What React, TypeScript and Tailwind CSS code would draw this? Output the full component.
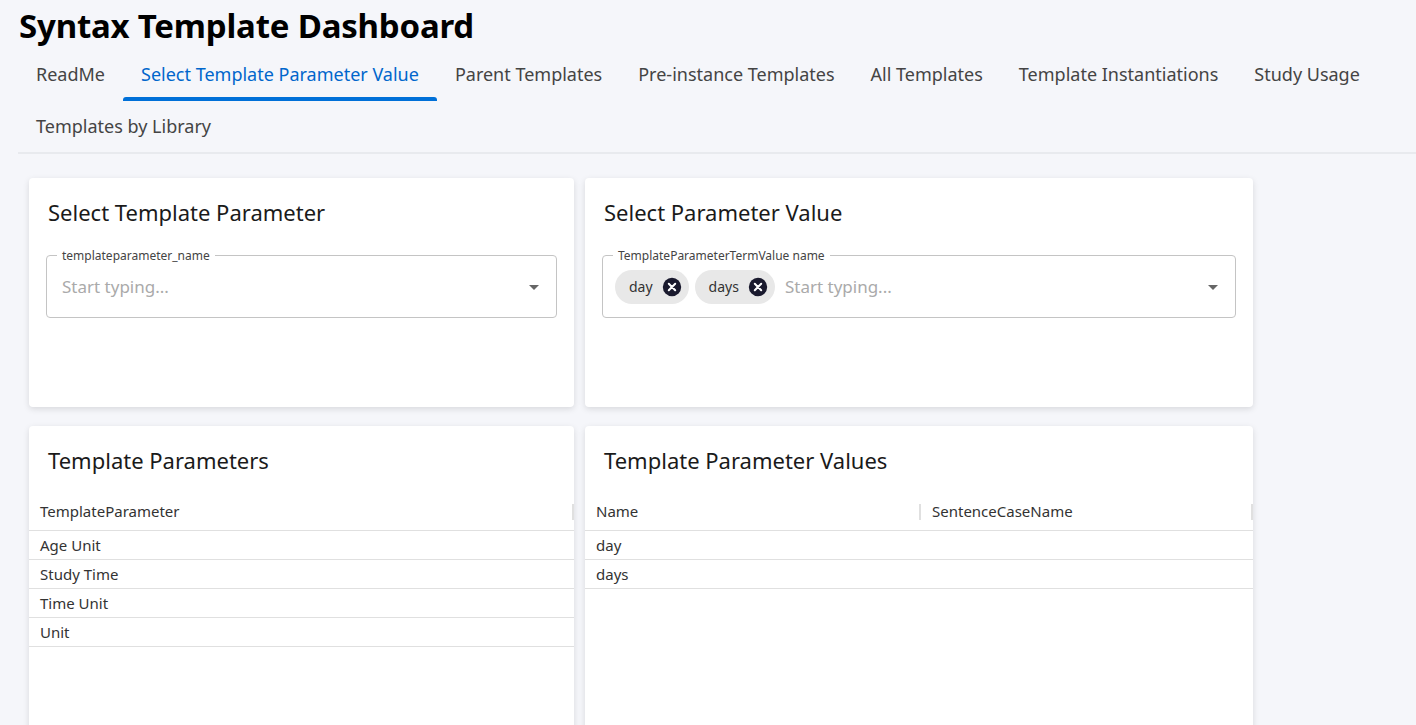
import React from "react";

const tabs = ["ReadMe","Select Template Parameter Value","Parent Templates","Pre-instance Templates","All Templates","Template Instantiations","Study Usage"];

function Caret(){return <svg width="24" height="24" viewBox="0 0 24 24" className="text-[#666]"><path d="M7 10l5 5 5-5z" fill="currentColor"/></svg>;}

function Chip({label}:{label:string}){return (
  <div className="flex items-center h-[34px] rounded-full bg-[#e8e8e8] pl-[14px] pr-[6px] gap-[8px] text-[14px] text-[#333]">
    <span>{label}</span>
    <svg width="22" height="22" viewBox="0 0 24 24"><circle cx="12" cy="12" r="10" fill="#1a1a2e"/><path d="M8.5 8.5l7 7M15.5 8.5l-7 7" stroke="#fff" strokeWidth="2.2" strokeLinecap="round"/></svg>
  </div>);}

function Table({cols,rows}:{cols:string[];rows:string[]}){return (
  <div className="mt-[16px]">
    <div className="flex h-[38px] items-center border-b border-[#e0e0e0] text-[15px] text-[#333]">
      {cols.map((c,i)=>(
        <div key={c} className={`flex items-center justify-between h-full ${cols.length===1?"flex-1":i===0?"w-[336px]":"flex-1"}`}>
          <span className="pl-[11px]">{c}</span>
          <span className="w-[2px] h-[16px] bg-[#e0e0e0]"></span>
        </div>))}
    </div>
    {rows.map(r=>(
      <div key={r} className="h-[29px] flex items-center border-b border-[#e0e0e0] pl-[11px] text-[15px] text-[#333]">{r}</div>))}
  </div>);}

export default function App(){
  return (
    <div className="min-h-[725px] h-[725px] overflow-hidden bg-[#f5f6fa] text-[#1a1a1a]" style={{fontFamily:'"Noto Sans", sans-serif'}}>
      <h1 className="pl-[19px] pt-[4px] text-[33px] font-bold leading-[44px] tracking-[-0.2px] text-black">Syntax Template Dashboard</h1>
      <div className="ml-[18px] border-b-2 border-[#e8eaee]">
        <div className="flex flex-wrap">
          {tabs.map((t,i)=>(
            <div key={t} className={`relative h-[52px] px-[18px] flex items-center text-[18px] ${i===1?"text-[#0066cc]":"text-[#444]"}`}>
              {t}
              {i===1 && <div className="absolute left-0 right-0 bottom-[-1px] h-[4px] rounded-t-[3px] bg-[#0070d8]"></div>}
            </div>))}
          <div className="h-[52px] px-[18px] flex items-center text-[18px] text-[#444]">Templates by Library</div>
        </div>
      </div>
      <div className="pl-[29px] pt-[24px] grid grid-cols-[545px_668px] gap-x-[11px] gap-y-[19px]">
        <div className="bg-white rounded-[4px] shadow-[0_2px_6px_rgba(0,0,0,0.12)] h-[229px] px-[17px] pt-[18px]">
          <div className="text-[22px] pl-[2px]">Select Template Parameter</div>
          <div className="relative mt-[26px] border border-[#c4c4c4] rounded-[4px] h-[63px] flex items-center pl-[15px] pr-[10px]">
            <span className="absolute -top-[9px] left-[10px] bg-white px-[5px] text-[12px] text-[#444]">templateparameter_name</span>
            <span className="flex-1 text-[17px] text-[#aaa]">Start typing...</span>
            <Caret/>
          </div>
        </div>
        <div className="bg-white rounded-[4px] shadow-[0_2px_6px_rgba(0,0,0,0.12)] h-[229px] px-[17px] pt-[18px]">
          <div className="text-[22px] pl-[2px]">Select Parameter Value</div>
          <div className="relative mt-[26px] border border-[#c4c4c4] rounded-[4px] h-[63px] flex items-center pl-[12px] pr-[10px] gap-[6px]">
            <span className="absolute -top-[9px] left-[10px] bg-white px-[5px] text-[12px] text-[#444]">TemplateParameterTermValue name</span>
            <Chip label="day"/><Chip label="days"/>
            <span className="flex-1 pl-[4px] text-[17px] text-[#aaa]">Start typing...</span>
            <Caret/>
          </div>
        </div>
        <div className="bg-white rounded-[4px] shadow-[0_2px_6px_rgba(0,0,0,0.12)] h-[320px] pt-[18px]">
          <div className="text-[22px] pl-[19px]">Template Parameters</div>
          <Table cols={["TemplateParameter"]} rows={["Age Unit","Study Time","Time Unit","Unit"]}/>
        </div>
        <div className="bg-white rounded-[4px] shadow-[0_2px_6px_rgba(0,0,0,0.12)] h-[320px] pt-[18px]">
          <div className="text-[22px] pl-[19px]">Template Parameter Values</div>
          <Table cols={["Name","SentenceCaseName"]} rows={["day","days"]}/>
        </div>
      </div>
    </div>);
}
